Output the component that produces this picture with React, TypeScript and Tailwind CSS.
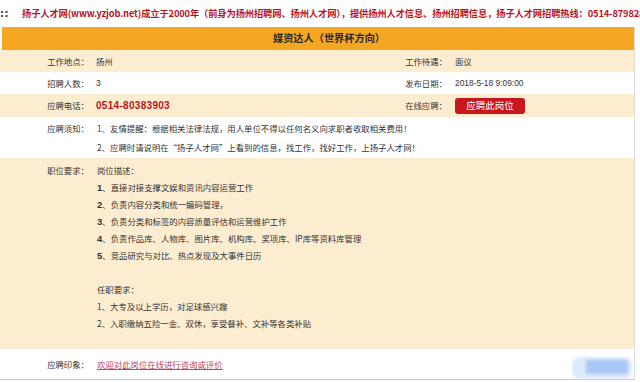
import React from "react";

const F = '"Noto Sans CJK SC", "Noto Sans", sans-serif';

function Row({
  bg,
  h,
  children,
}: {
  bg: "cream" | "white";
  h: string;
  children: React.ReactNode;
}) {
  return (
    <div
      className={`flex ${h} ${bg === "cream" ? "bg-[#fdedd0]" : "bg-white"}`}
    >
      {children}
    </div>
  );
}

export default function App() {
  const items = [
    ["1", "直接对接支撑文娱和资讯内容运营工作"],
    ["2", "负责内容分类和统一编码管理，"],
    ["3", "负责分类和标签的内容质量评估和运营维护工作"],
    ["4", "负责作品库、人物库、图片库、机构库、奖项库、IP库等资料库管理"],
    ["5", "竞品研究与对比、热点发现及大事件日历"],
  ];
  return (
    <div
      className="w-[640px] h-[382px] bg-white overflow-hidden relative text-[#333]"
      style={{ fontFamily: F }}
    >
      {/* top banner */}
      <div className="h-[27px] flex items-center whitespace-nowrap overflow-hidden">
        <div className="w-[22px] shrink-0 flex items-center pl-[1px] gap-[2px]">
          <div className="flex flex-col gap-[2px]">
            <span className="block w-[2px] h-[2px] bg-[#6b4b4b]" />
            <span className="block w-[2px] h-[2px] bg-[#6b4b4b]" />
          </div>
          <div className="flex flex-col gap-[2px]">
            <span className="block w-[3px] h-[2px] bg-[#9a7070]" />
            <span className="block w-[3px] h-[2px] bg-[#9a7070]" />
          </div>
        </div>
        <span className="shrink-0 text-[9.3px] font-bold text-[#b8161c] leading-none tracking-[-0.15px]">
          扬子人才网(www.yzjob.net)成立于2000年（前身为扬州招聘网、扬州人才网），提供扬州人才信息、扬州招聘信息，扬子人才网招聘热线：0514-87982888
        </span>
      </div>

      <div className="w-[635px] border-r border-[#dcdcdc] border-b border-b-[#c8c8c8]">
        {/* header */}
        <div className="h-[23px] bg-[#f5a724] flex items-center justify-center pl-[22px] ml-[2px]">
          <span className="text-[10.2px] font-bold text-[#2a2a2a] leading-none">
            媒资达人（世界杯方向）
          </span>
        </div>

        <div className="text-[8.4px] leading-none">
          <Row bg="cream" h="h-[22px] items-center">
            <div className="w-[92px] text-right pr-[3px]">工作地点：</div>
            <div className="w-[310px] pl-[4px]">扬州</div>
            <div className="w-[48px] text-right pr-[3px]">工作待遇：</div>
            <div className="flex-1 pl-[5px]">面议</div>
          </Row>
          <Row bg="white" h="h-[22px] items-center">
            <div className="w-[92px] text-right pr-[3px]">招聘人数：</div>
            <div
              className="w-[310px] pl-[4px]"
              style={{ fontFamily: '"Liberation Sans", sans-serif' }}
            >
              3
            </div>
            <div className="w-[48px] text-right pr-[3px]">发布日期：</div>
            <div
              className="flex-1 pl-[5px]"
              style={{ fontFamily: '"Liberation Sans", sans-serif' }}
            >
              2018-5-18 9:09:00
            </div>
          </Row>
          <Row bg="cream" h="h-[23px] items-center">
            <div className="w-[92px] text-right pr-[3px]">应聘电话：</div>
            <div
              className="w-[310px] pl-[4px] text-[10px] font-bold text-[#b8161c] tracking-[0.3px]"
              style={{ fontFamily: '"Liberation Sans", sans-serif' }}
            >
              0514-80383903
            </div>
            <div className="w-[48px] text-right pr-[3px]">在线应聘：</div>
            <div className="flex-1 pl-[5px]">
              <div className="w-[70px] h-[16px] rounded-[3px] bg-[#c8171f] text-white text-[9.5px] flex items-center justify-center">
                应聘此岗位
              </div>
            </div>
          </Row>
          <Row bg="white" h="h-[41px] py-[1.5px] leading-[19px]">
            <div className="w-[92px] text-right pr-[3px]">应聘须知：</div>
            <div className="flex-1 pl-[5px]">
              <div>1、友情提醒：根据相关法律法规，用人单位不得以任何名义向求职者收取相关费用！</div>
              <div>2、应聘时请说明在“扬子人才网”上看到的信息，找工作，找好工作，上扬子人才网！</div>
            </div>
          </Row>
          <Row bg="cream" h="h-[191px] pt-[3.5px] leading-[17px]">
            <div className="w-[92px] text-right pr-[3px]">职位要求：</div>
            <div className="flex-1 pl-[5px]">
              <div>岗位描述：</div>
              {items.map(([n, t]) => (
                <div key={n}>
                  <span
                    className="text-[9.5px] font-bold"
                    style={{ fontFamily: '"Liberation Sans", sans-serif' }}
                  >
                    {n}
                  </span>
                  、{t}
                </div>
              ))}
              <div>&nbsp;</div>
              <div>任职要求：</div>
              <div>1、大专及以上学历，对足球感兴趣</div>
              <div>2、入职缴纳五险一金、双休，享受餐补、文补等各类补贴</div>
            </div>
          </Row>
          <Row bg="white" h="h-[30px] items-center">
            <div className="w-[92px] text-right pr-[3px]">应聘印象：</div>
            <div className="flex-1 pl-[5px]">
              <span className="text-[#b8456a] underline">
                欢迎对此岗位在线进行咨询或评价
              </span>
            </div>
          </Row>
        </div>
      </div>

      {/* blurred watermark */}
      <div className="absolute left-[572px] top-[357px] w-[60px] h-[22px] rounded-[8px] bg-[#dfeafc] blur-[1px]">
        <div className="absolute left-[14px] top-[3px] w-[42px] h-[14px] bg-[#a9c8f7] blur-[1px]" />
      </div>
    </div>
  );
}
